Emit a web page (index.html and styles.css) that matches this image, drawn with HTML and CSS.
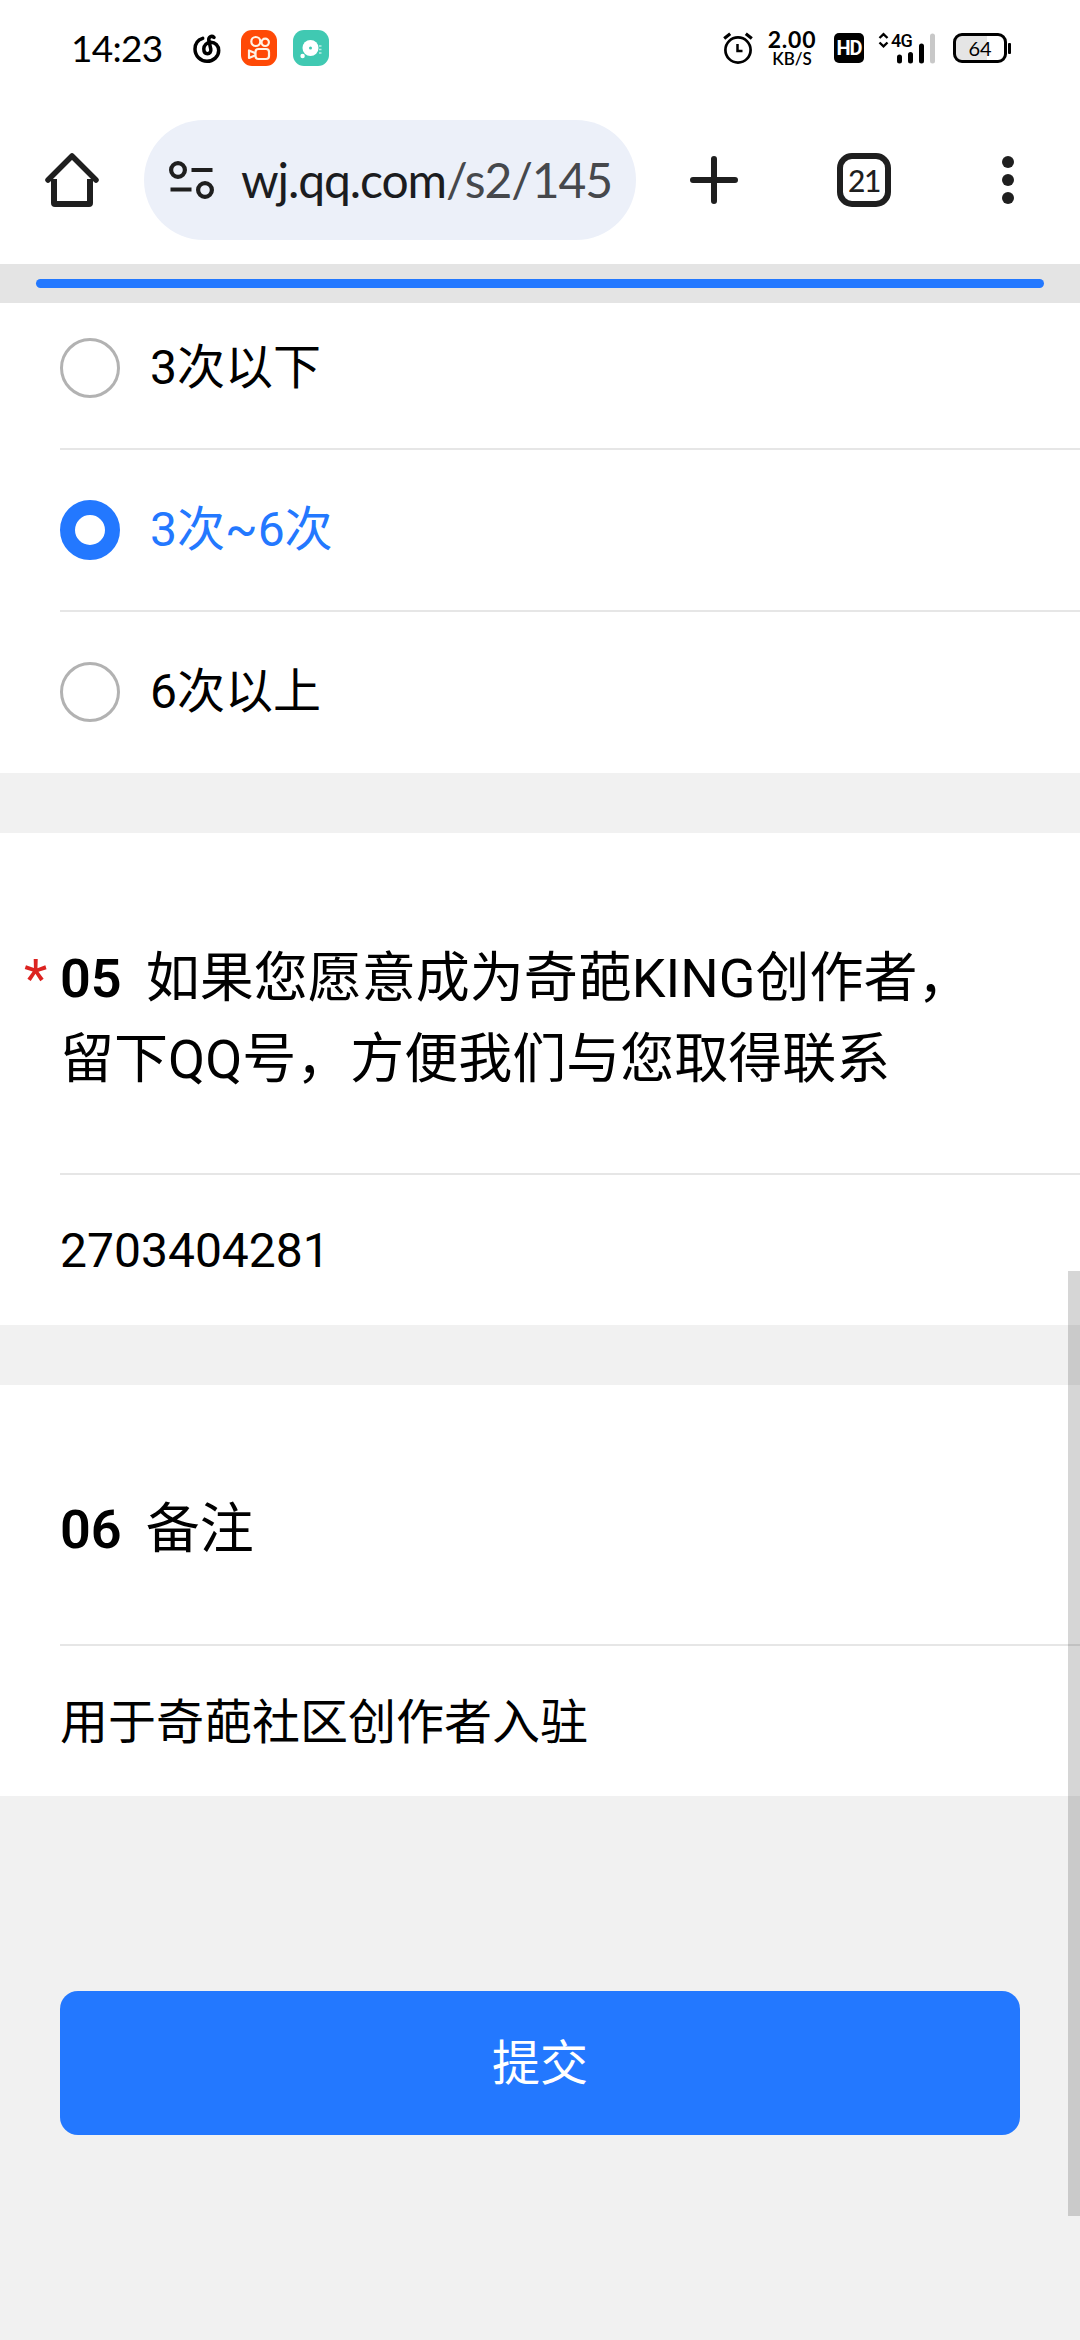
FILE: index.html
```html
<!DOCTYPE html>
<html lang="zh-CN">
<head>
<meta charset="utf-8">
<title>问卷</title>
<link rel="stylesheet" href="styles.css">
</head>
<body>
<header class="status">
  <span class="clock">14:23</span>
  <svg class="app-music" width="30" height="34" viewBox="0 0 30 34" fill="none" stroke="#000" stroke-width="3.500" stroke-linecap="round"><path d="M10.700 7.300C5.500 9 3 13.500 3 18c0 7 5.500 12.300 12 12.300S26.700 25.500 26.700 19.500c0-5-3.700-8.300-7.700-8.300-4.200 0-7.200 3-7.200 6.600 0 3 1.500 4.900 3.700 4.900s3.700-2 3.300-4.500L16.800 9.500C16.300 6 19.500 4.300 22 6.300"/></svg>
  <svg class="app-video" width="36" height="36" viewBox="0 0 36 36" fill="none"><rect width="36" height="36" rx="11" fill="#ff4906"/><g stroke="#fff3e6" stroke-width="2.200" stroke-linejoin="round"><circle cx="14.800" cy="11.500" r="4.500"/><circle cx="24.200" cy="12.300" r="3.700"/><rect x="14.500" y="19" width="13.500" height="10" rx="3"/><path d="M14.500 23.200L8 20.500v7.500l6.500-2.700"/></g></svg>
  <svg class="app-disc" width="36" height="36" viewBox="0 0 36 36"><rect width="36" height="36" rx="11" fill="#40c9b2"/><circle cx="17.500" cy="18" r="8" fill="#fff"/><circle cx="17.500" cy="18" r="1.500" fill="#40c9b2"/><circle cx="9.600" cy="26" r="2.200" fill="#fff"/><path d="M26 16h2.500M26 19.500h2.500M26 23h2.500" stroke="#fff" stroke-opacity=".65" stroke-width="1.300"/></svg>
  <svg class="alarm" width="30" height="32" viewBox="0 0 30 32" fill="none" stroke="#000" stroke-width="2.700"><circle cx="15" cy="18" r="12.600"/><path d="M14.500 12v7h5" stroke-width="2.500"/><path d="M1.200 6.500l6-4.700M28.800 6.500l-6-4.700" stroke-width="3.200"/></svg>
  <span class="speed"><b class="rate">2.00</b><b class="unit">KB/S</b></span>
  <span class="hd">HD</span>
  <span class="signal">
    <svg width="58" height="34" viewBox="0 0 58 34" fill="none"><path d="M2.500 7L6.500 3.200 10.500 7M2.500 11.500l4 3.800 4-3.800" stroke="#000" stroke-width="2.400"/><path d="M22.500 26v4M33.500 23.500v6.500M44.500 15v15" stroke="#000" stroke-width="5" stroke-linecap="round"/><path d="M55.500 5v25" stroke="#c8c8c8" stroke-width="5" stroke-linecap="round"/></svg>
    <span class="net">4G</span>
  </span>
  <span class="battery"><span class="level">64</span></span>
  <span class="knob"></span>
</header>

<nav class="toolbar">
  <svg class="home" width="72" height="72" viewBox="0 0 72 72" fill="none" stroke="#1f1f1f" stroke-width="6"><path d="M18 35v24q0 1 1 1h34q1 0 1-1V35" stroke-linejoin="round"/><path d="M12 36L36 12l24 24" stroke-width="5.500" stroke-linecap="round" stroke-linejoin="round"/></svg>
  <div class="address">
    <svg width="46" height="40" viewBox="0 0 46 40" fill="none" stroke="#1f1f1f" stroke-width="4.200"><circle cx="9" cy="10" r="6.900"/><path d="M22.500 10H43.500M1.500 29.500H22.500"/><circle cx="36" cy="30" r="6.900"/></svg>
    <span class="url">wj.qq.com<span class="path">/s2/145</span></span>
  </div>
  <svg class="plus" width="72" height="72" viewBox="0 0 72 72" stroke="#1f1f1f" stroke-width="6" stroke-linecap="round"><path d="M36 15v42M15 36h42"/></svg>
  <span class="tabs">21</span>
  <svg class="more" width="72" height="72" viewBox="0 0 72 72" fill="#1f1f1f"><circle cx="36" cy="18" r="6"/><circle cx="36" cy="36" r="6"/><circle cx="36" cy="54" r="6"/></svg>
</nav>

<div class="progress"><div class="progress-bar"></div></div>

<main>
  <section class="card options">
    <label class="option first"><span class="radio"></span>3次以下</label>
    <label class="option picked"><span class="radio"></span>3次~6次</label>
    <label class="option"><span class="radio"></span>6次以上</label>
  </section>

  <section class="card">
    <h2 class="question long"><span class="required">*</span><span class="number">05</span>如果您愿意成为奇葩KING创作者，<br>留下QQ号，方便我们与您取得联系</h2>
    <div class="answer">2703404281</div>
  </section>

  <section class="card">
    <h2 class="question"><span class="number">06</span>备注</h2>
    <div class="answer note">用于奇葩社区创作者入驻</div>
  </section>

  <button class="submit">提交</button>
</main>
<div class="scrollbar"></div>
</body>
</html>
```

FILE: styles.css
```css
* { box-sizing: border-box; }
body {
  margin: 0;
  width: 1080px;
  height: 2340px;
  overflow: hidden;
  position: relative;
  background: #f1f1f1;
  color: #000;
  font-family: Roboto, "Noto Sans CJK SC", sans-serif;
}
svg { display: block; flex: none; }

.status {
  display: flex;
  align-items: center;
  height: 96px;
  padding-left: 71px;
  background: #fff;
}
.clock {
  width: 92px;
  font: 400 37px/38px Lato, sans-serif;
  letter-spacing: -0.7px;
  white-space: nowrap;
}
.app-music { margin-left: 29px; }
.app-video { margin-left: 19px; }
.app-disc { margin-left: 16px; }
.alarm { margin-left: 394px; }
.speed {
  display: flex;
  flex-direction: column;
  align-items: center;
  width: 52px;
  margin-left: 13px;
  font-family: Lato, sans-serif;
}
.rate { font-size: 23px; line-height: 21px; letter-spacing: 0.8px; }
.unit { font-size: 17px; line-height: 18px; font-weight: 600; }
.hd {
  width: 30px;
  height: 30px;
  margin-left: 16px;
  border-radius: 5px;
  background: #000;
  color: #fff;
  font: 700 20px/30px Roboto, sans-serif;
  text-align: center;
  letter-spacing: -1px;
}
.signal { position: relative; margin-left: 13px; }
.net {
  position: absolute;
  left: 14px;
  top: 1px;
  font: 500 18px/18px Roboto, sans-serif;
  letter-spacing: -0.8px;
}
.battery {
  width: 54px;
  height: 30px;
  margin-left: 18px;
  border: 3px solid #000;
  border-radius: 9px;
  background: linear-gradient(90deg, #e5e5e5 31px, #fff 31px);
  text-align: center;
}
.level { display: block; font: 400 20px/24px Lato, sans-serif; }
.knob { width: 3px; height: 11px; margin-left: 1px; background: #000; border-radius: 1px; }

.toolbar {
  display: flex;
  align-items: center;
  height: 168px;
  padding-left: 36px;
  background: #fff;
}
.address {
  display: flex;
  align-items: center;
  width: 492px;
  height: 120px;
  margin-left: 36px;
  padding-left: 25px;
  border-radius: 60px;
  background: #ecf0f9;
}
.url {
  margin-left: 26px;
  color: #1b1c1f;
  font: 400 48px/60px Lato, sans-serif;
  letter-spacing: -1.1px;
  white-space: nowrap;
}
.path { color: #46484c; }
.plus { margin-left: 42px; }
.tabs {
  width: 54px;
  height: 54px;
  margin-left: 87px;
  border: 6px solid #1f1f1f;
  border-radius: 15px;
  color: #1f1f1f;
  font: 500 30px/42px Lato, sans-serif;
  letter-spacing: -1.5px;
  text-align: center;
}
.more { margin-left: 81px; }

.progress { height: 39px; padding: 15px 36px 0; background: #e4e4e4; }
.progress-bar { height: 9px; border-radius: 5px; background: #2378ff; }

.card { background: #fff; margin-bottom: 60px; padding-left: 60px; }
.option {
  display: flex;
  align-items: center;
  height: 162px;
  border-bottom: 2px solid #e6e6e6;
  font-size: 48px;
  line-height: 72px;
}
.option.first { height: 147px; padding-bottom: 15px; }
.option:last-child { height: 161px; padding-bottom: 1px; border-bottom: 0; }
.radio {
  width: 60px;
  height: 60px;
  margin-right: 30px;
  border: 3px solid #b2b2b2;
  border-radius: 50%;
}
.picked { color: #2378ff; }
.picked .radio { border: 15px solid #2378ff; }

.question {
  position: relative;
  margin: 0;
  padding: 104px 0 74px;
  border-bottom: 2px solid #e6e6e6;
  font-size: 54px;
  line-height: 81px;
  font-weight: 400;
}
.question.long { padding: 105px 0 73px; }
.required {
  position: absolute;
  left: -36px;
  top: 105px;
  color: #dc2320;
}
.number { font-weight: 600; margin-right: 24px; }
.answer { height: 150px; font-size: 48px; line-height: 151px; }
.answer.note { line-height: 153px; }

.submit {
  display: block;
  width: 960px;
  height: 144px;
  margin: 195px 0 0 60px;
  padding: 0 0 8px;
  border: 0;
  border-radius: 18px;
  background: #2378ff;
  color: #fff;
  font: inherit;
  font-size: 48px;
}
.scrollbar {
  position: absolute;
  right: 0;
  top: 1271px;
  width: 12px;
  height: 945px;
  background: rgba(0, 0, 0, 0.16);
}
```
